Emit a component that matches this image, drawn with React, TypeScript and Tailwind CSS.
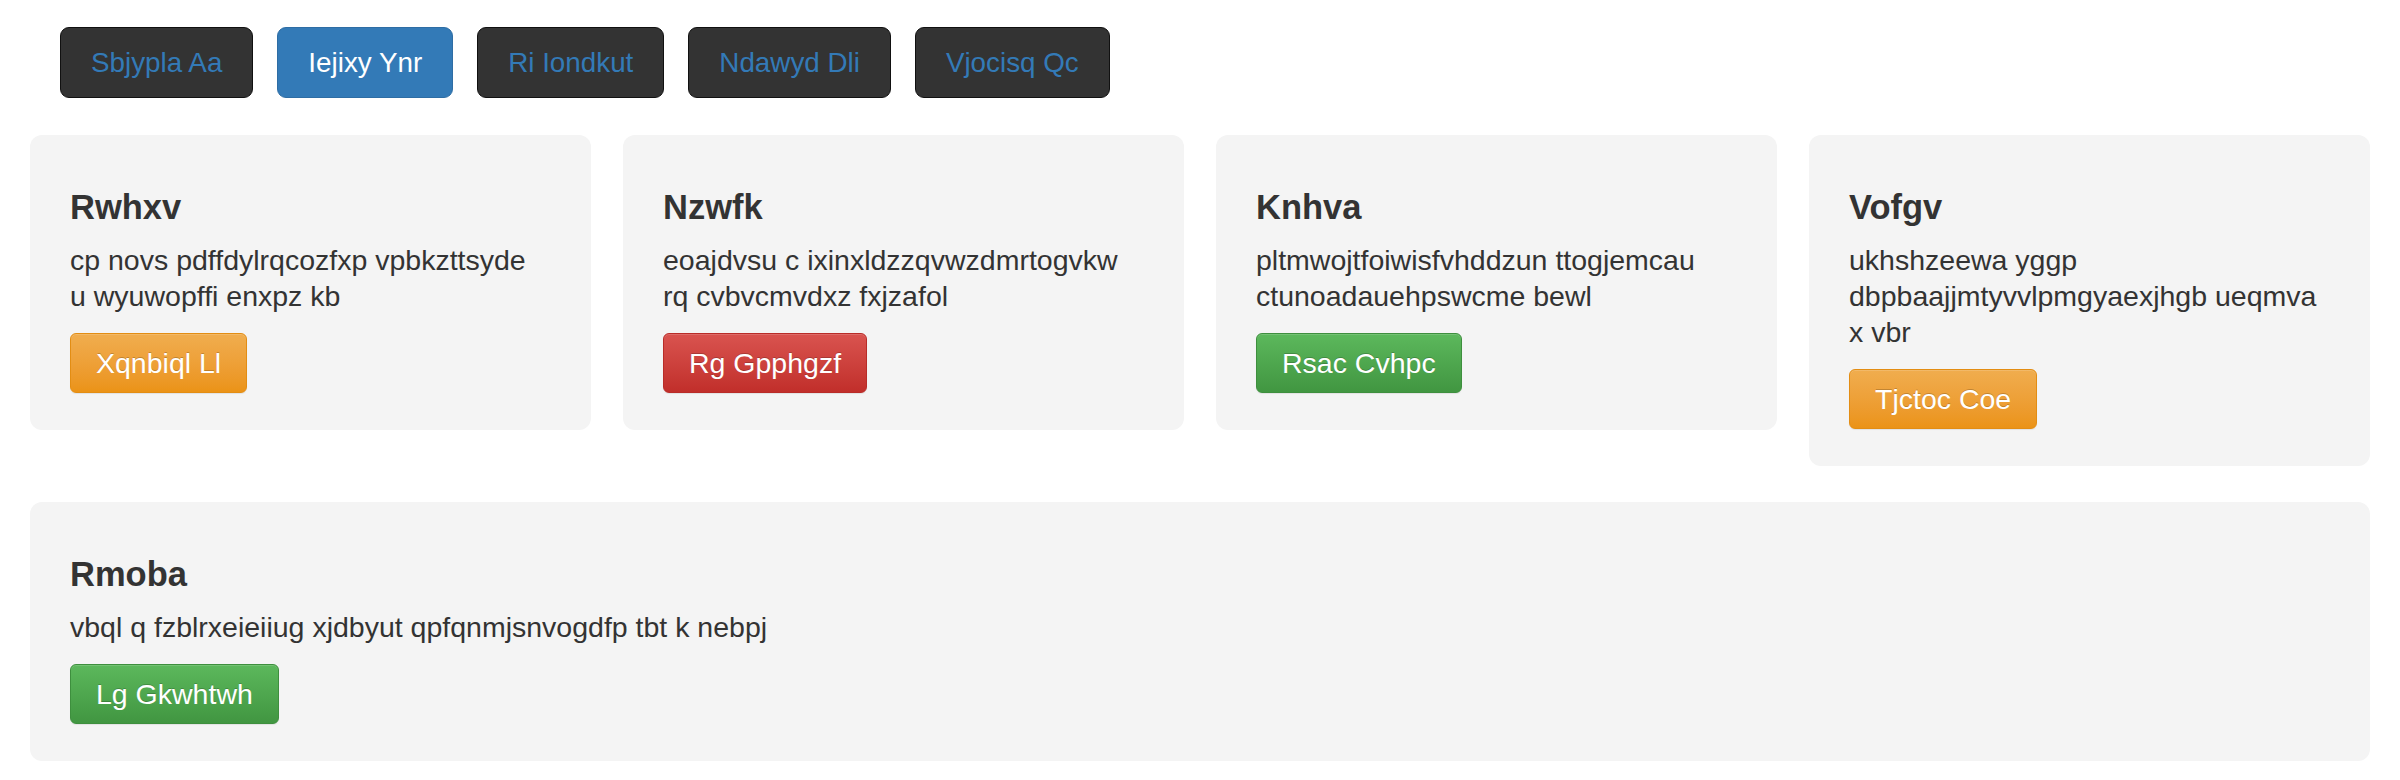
import React from "react";

type Variant = "warning" | "danger" | "success";

const btnClass: Record<Variant, string> = {
  warning: "bg-linear-to-b from-[#f0ad4e] to-[#eb9316] border-[#e38d13]",
  danger: "bg-linear-to-b from-[#d9534f] to-[#c12e2a] border-[#b92c28]",
  success: "bg-linear-to-b from-[#5cb85c] to-[#419641] border-[#3e8f3e]",
};

const navItems = [
  { label: "Sbjypla Aa", active: false },
  { label: "Iejixy Ynr", active: true },
  { label: "Ri Iondkut", active: false },
  { label: "Ndawyd Dli", active: false },
  { label: "Vjocisq Qc", active: false },
];

const cards: { title: string; text: string; button: string; variant: Variant }[] = [
  { title: "Rwhxv", text: "cp novs pdffdylrqcozfxp vpbkzttsyde u wyuwopffi enxpz kb", button: "Xqnbiql Ll", variant: "warning" },
  { title: "Nzwfk", text: "eoajdvsu c ixinxldzzqvwzdmrtogvkw rq cvbvcmvdxz fxjzafol", button: "Rg Gpphgzf", variant: "danger" },
  { title: "Knhva", text: "pltmwojtfoiwisfvhddzun ttogjemcau ctunoadauehpswcme bewl", button: "Rsac Cvhpc", variant: "success" },
  { title: "Vofgv", text: "ukhshzeewa yggp dbpbaajjmtyvvlpmgyaexjhgb ueqmva x vbr", button: "Tjctoc Coe", variant: "warning" },
];

function CardButton({ label, variant }: { label: string; variant: Variant }) {
  return (
    <button
      className={`inline-flex items-center h-[60px] px-[25px] border rounded-[6px] text-white text-[28.5px] leading-none [text-shadow:0_-1px_0_rgba(0,0,0,0.2)] shadow-[inset_0_1px_0_rgba(255,255,255,0.15),0_1px_1px_rgba(0,0,0,0.075)] ${btnClass[variant]}`}
    >
      {label}
    </button>
  );
}

function Card({ title, text, button, variant }: { title: string; text: string; button: string; variant: Variant }) {
  return (
    <div className="bg-[#f4f4f4] rounded-[12px] pt-[54px] pb-[37px] pl-[40px] pr-[47px]">
      <h3 className="text-[34.5px] leading-[1.1] font-bold text-[#333]">{title}</h3>
      <p className="mt-[15px] text-[28.5px] leading-[36px] text-[#333]">{text}</p>
      <div className="mt-[19px]">
        <CardButton label={button} variant={variant} />
      </div>
    </div>
  );
}

export default function App() {
  return (
    <div
      className="min-h-[780px] bg-white px-[30px] pt-[27px] pb-[20px]"
      style={{ fontFamily: '"Liberation Sans", Arial, Helvetica, sans-serif' }}
    >
      <nav className="flex gap-[24px] pl-[30px]">
        {navItems.map((n) => (
          <button
            key={n.label}
            className={
              n.active
                ? "inline-flex items-center h-[71px] px-[30px] border border-[#2e6da4] rounded-[9px] bg-[#337ab7] text-white text-[27.8px] leading-none"
                : "inline-flex items-center h-[71px] px-[30px] border border-[#111] rounded-[9px] bg-[#333333] text-[#337ab7] text-[27.8px] leading-none"
            }
          >
            {n.label}
          </button>
        ))}
      </nav>

      <div className="mt-[37px] grid grid-cols-4 gap-[32px] items-start">
        {cards.map((c) => (
          <Card key={c.title} {...c} />
        ))}
      </div>

      <div className="mt-[36px]">
        <Card
          title="Rmoba"
          text="vbql q fzblrxeieiiug xjdbyut qpfqnmjsnvogdfp tbt k nebpj"
          button="Lg Gkwhtwh"
          variant="success"
        />
      </div>
    </div>
  );
}
